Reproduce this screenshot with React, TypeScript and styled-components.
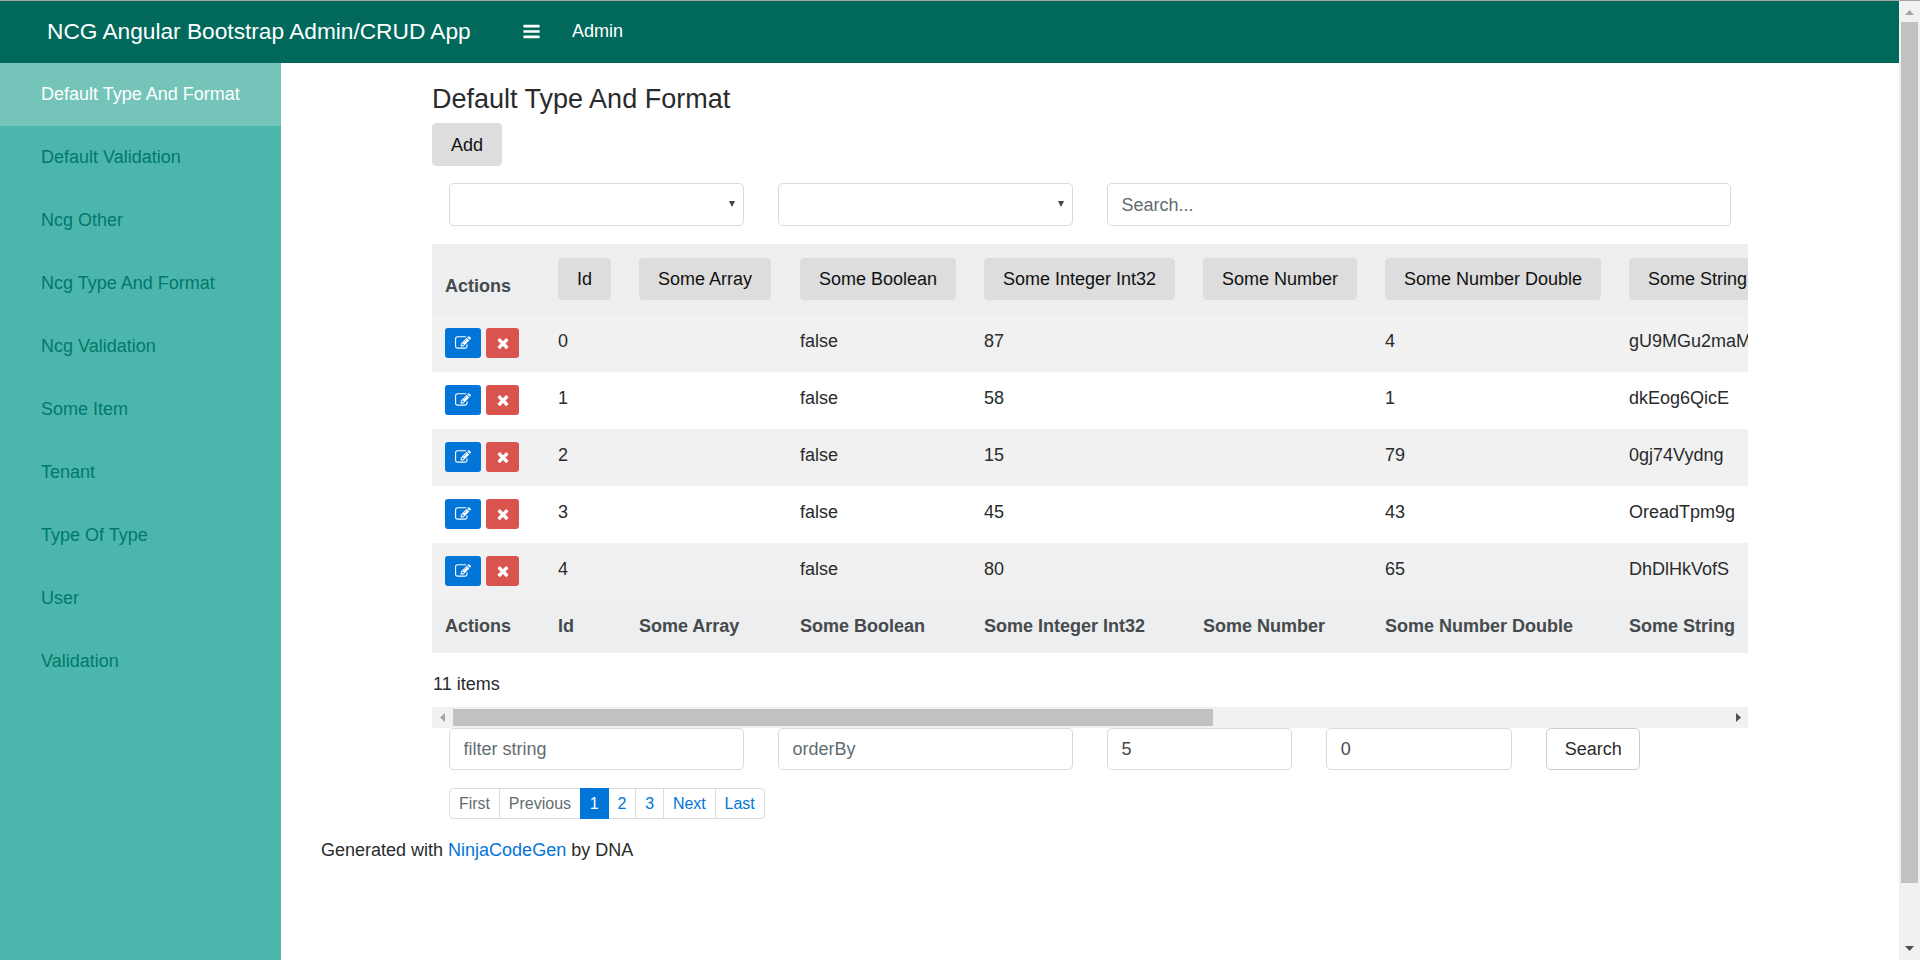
import React from "react";
import styled, { createGlobalStyle } from "styled-components";

const Global = createGlobalStyle`
  html, body { margin: 0; padding: 0; height: 960px; overflow: hidden; background: #fff; }
  body { font-family: "Liberation Sans", Arial, sans-serif; font-size: 18px; line-height: 27px; color: #292b2c; }
  * { box-sizing: border-box; }
`;

const Page = styled.div`
  display: flex;
  flex-direction: column;
  width: 1920px;
  height: 960px;
  overflow: hidden;
  border-top: 1px solid #a6a6a6;
`;
const Shell = styled.div`
  flex: 1;
  display: flex;
  min-height: 0;
`;
const Main = styled.div`
  flex: 1;
  display: flex;
  flex-direction: column;
  min-width: 0;
`;
const Rail = styled.div`
  width: 21px;
  background: #f1f1f1;
  display: flex;
  flex-direction: column;
  align-items: center;
  padding-top: 9px;
`;
const RailThumb = styled.div`
  width: 17px;
  height: 861px;
  margin-top: 7px;
  background: #c1c1c1;
`;
const RailDown = styled.div`
  margin-top: 63px;
  display: flex;
`;
const Header = styled.header`
  height: 62px;
  flex: none;
  background: #00695c;
  display: flex;
  align-items: center;
  color: #fff;
  padding: 0 0 2px 47px;
`;
const Brand = styled.div`
  font-size: 22.7px;
  width: 475px;
  white-space: nowrap;
`;
const MenuToggle = styled.div`
  display: flex;
  width: 50px;
`;
const HeaderLink = styled.div`
  font-size: 18px;
`;
const Body = styled.div`
  flex: 1;
  display: flex;
  min-height: 0;
`;
const Sidebar = styled.nav`
  width: 281px;
  flex: none;
  background: #4db6ac;
`;
const SideItem = styled.div<{ $active?: boolean }>`
  height: 63px;
  padding: 0 0 0 41px;
  display: flex;
  align-items: center;
  color: ${(p) => (p.$active ? "#fff" : "#00796b")};
  background: ${(p) => (p.$active ? "#74c4ba" : "transparent")};
`;
const Content = styled.main`
  flex: 1;
  min-width: 0;
  padding: 22px 40px 0;
`;
const Inner = styled.div`
  margin: 0 111px;
`;
const Title = styled.h3`
  margin: 0 0 10px;
  font-size: 27px;
  font-weight: 400;
  line-height: 28px;
`;
const GrayButton = styled.button`
  display: inline-block;
  height: 42px;
  padding: 0 18px;
  border: 1px solid #ddd;
  border-radius: 4px;
  background: #ddd;
  color: #111;
  font: 400 18px/27px "Liberation Sans", Arial, sans-serif;
  white-space: nowrap;
`;
const AddButton = styled(GrayButton)`
  display: block;
  height: 43px;
  padding-top: 2px;
`;
const GridRow = styled.div<{ $top?: number }>`
  display: grid;
  grid-template-columns: repeat(12, 1fr);
  margin-top: ${(p) => p.$top ?? 0}px;
`;
const Col = styled.div<{ $span: number }>`
  grid-column: span ${(p) => p.$span};
  padding: 0 17px 0 16.5px;
  position: relative;
`;
const fieldCss = `
  display: block;
  width: 100%;
  height: 42px;
  padding: 0 14px;
  border: 1px solid #d9d9d9;
  border-radius: 4.8px;
  background: #fff;
  color: #464a4c;
  font: 400 18px/27px "Liberation Sans", Arial, sans-serif;
  outline: none;
  &::placeholder { color: #636c72; opacity: 1; }
`;
const Input = styled.input`${fieldCss}`;
const Select = styled.select`
  ${fieldCss}
  height: 43px;
  appearance: none;
`;
const SearchInput = styled(Input)`
  height: 43px;
  padding-top: 2px;
`;
const Caret = styled.span`
  position: absolute;
  right: 26px;
  top: 18px;
  width: 0;
  height: 0;
  border-left: 3.5px solid transparent;
  border-right: 3.5px solid transparent;
  border-top: 6px solid #444;
`;
const SearchButton = styled.button`
  height: 42px;
  width: 94px;
  margin-left: 1px;
  border: 1px solid #ccc;
  border-radius: 4.8px;
  background: #fff;
  color: #292b2c;
  font: 400 18px/27px "Liberation Sans", Arial, sans-serif;
  padding: 0;
`;
const TableClip = styled.div`
  margin-top: 18px;
  overflow: hidden;
  height: 409px;
`;
const Table = styled.table`
  border-collapse: collapse;
  table-layout: fixed;
  width: 2204px;
`;
const HeadCell = styled.th`
  height: 71px;
  padding: 14px 0 0 13px;
  background: #eceeef;
  color: #464a4c;
  text-align: left;
  vertical-align: top;
  font-weight: 700;
  white-space: nowrap;
`;
const ActionsLabel = styled.div`
  padding-top: 15px;
`;
const BodyRow = styled.tr<{ $striped: boolean }>`
  background: ${(p) => (p.$striped ? "#f1f1f1" : "#fff")};
`;
const Cell = styled.td`
  height: 57px;
  padding: 13px 0 0 13px;
  vertical-align: top;
  white-space: nowrap;
`;
const ActionCell = styled(Cell)`
  padding-top: 13px;
`;
const Actions = styled.div`
  display: flex;
  gap: 5px;
`;
const IconButton = styled.button<{ $bg: string; $w: number }>`
  width: ${(p) => p.$w}px;
  height: 30px;
  padding: 0;
  border: 0;
  border-radius: 3px;
  background: ${(p) => p.$bg};
  color: #fff;
  display: flex;
  align-items: center;
  justify-content: center;
`;
const FootCell = styled.th`
  height: 53px;
  padding: 0 0 1px 13px;
  background: #eceeef;
  color: #464a4c;
  text-align: left;
  font-weight: 700;
  white-space: nowrap;
`;
const Count = styled.div`
  margin: 18px 0 9px 1px;
  height: 27px;
`;
const HScroll = styled.div`
  height: 21px;
  background: #f1f1f1;
  display: flex;
  align-items: center;
  padding: 0 7px 0 8px;
`;
const HThumb = styled.div`
  width: 760px;
  height: 17px;
  margin-left: 8px;
  background: #c1c1c1;
`;
const HSpacer = styled.div`
  flex: 1;
`;
const Pager = styled.ul`
  display: flex;
  list-style: none;
  margin: 18px 0 0 17px;
  padding: 0;
  font-size: 16px;
`;
const PageItem = styled.li<{ $state?: "off" | "on" }>`
  height: 31px;
  line-height: 29px;
  padding: 0 8.9px;
  margin-left: -1px;
  border: 1px solid ${(p) => (p.$state === "on" ? "#0275d8" : "#ddd")};
  background: ${(p) => (p.$state === "on" ? "#0275d8" : "#fff")};
  color: ${(p) => (p.$state === "on" ? "#fff" : p.$state === "off" ? "#636c72" : "#0275d8")};
  position: relative;
  z-index: ${(p) => (p.$state === "on" ? 1 : 0)};
  &:first-child { margin-left: 0; border-radius: 4px 0 0 4px; }
  &:last-child { border-radius: 0 4px 4px 0; }
`;
const Footer = styled.p`
  margin: 18px 0 0;
`;
const Link = styled.a`
  color: #0275d8;
  text-decoration: none;
`;

const PENCIL =
  "M888 1184l116-116-152-152-116 116v56h96v96h56zm440-720q-16-16-33 1l-350 350q-17 17-1 33t33-1l350-350q17-17 1-33zm80 594v190q0 119-84.5 203.5t-203.5 84.5h-832q-119 0-203.5-84.5t-84.5-203.5v-832q0-119 84.5-203.5t203.5-84.5h832q63 0 117 25 15 7 18 23 3 17-9 29l-49 49q-14 14-32 8-23-6-45-6h-832q-66 0-113 47t-47 113v832q0 66 47 113t113 47h832q66 0 113-47t47-113v-126q0-13 9-22l64-64q15-15 35-7t20 29zm-96-738l288 288-672 672h-288v-288zm444 132l-92 92-288-288 92-92q28-28 68-28t68 28l152 152q28 28 28 68t-28 68z";
const TIMES =
  "M1490 1322q0 40-28 68l-136 136q-28 28-68 28t-68-28l-294-294-294 294q-28 28-68 28t-68-28l-136-136q-28-28-28-68t28-68l294-294-294-294q-28-28-28-68t28-68l136-136q28-28 68-28t68 28l294 294 294-294q28-28 68-28t68 28l136 136q28 28 28 68t-28 68l-294 294 294 294q28 28 28 68z";
const BARS =
  "M1664 1344v128q0 26-19 45t-45 19h-1408q-26 0-45-19t-19-45v-128q0-26 19-45t45-19h1408q26 0 45 19t19 45zm0-512v128q0 26-19 45t-45 19h-1408q-26 0-45-19t-19-45v-128q0-26 19-45t45-19h1408q26 0 45 19t19 45zm0-512v128q0 26-19 45t-45 19h-1408q-26 0-45-19t-19-45v-128q0-26 19-45t45-19h1408q26 0 45 19t19 45z";

const Glyph = ({ d, size }: { d: string; size: number }) => (
  <svg width={size} height={size} viewBox="0 0 1792 1792" fill="currentColor">
    <path d={d} />
  </svg>
);

const Tri = ({ dir, color, w, h }: { dir: "up" | "down" | "left" | "right"; color: string; w: number; h: number }) => {
  const pts = {
    up: `0,${h} ${w},${h} ${w / 2},0`,
    down: `0,0 ${w},0 ${w / 2},${h}`,
    left: `${w},0 ${w},${h} 0,${h / 2}`,
    right: `0,0 0,${h} ${w},${h / 2}`,
  }[dir];
  return (
    <svg width={w} height={h} viewBox={`0 0 ${w} ${h}`} style={{ flex: "none", display: "block" }}>
      <polygon points={pts} fill={color} />
    </svg>
  );
};

const NAV = [
  "Default Type And Format",
  "Default Validation",
  "Ncg Other",
  "Ncg Type And Format",
  "Ncg Validation",
  "Some Item",
  "Tenant",
  "Type Of Type",
  "User",
  "Validation",
];
const COLS = ["Id", "Some Array", "Some Boolean", "Some Integer Int32", "Some Number", "Some Number Double", "Some String"];
const WIDTHS = [113, 81, 161, 184, 219, 182, 244, 1020];
const ROWS = [
  ["0", "87", "4", "gU9MGu2maMz"],
  ["1", "58", "1", "dkEog6QicE"],
  ["2", "15", "79", "0gj74Vydng"],
  ["3", "45", "43", "OreadTpm9g"],
  ["4", "80", "65", "DhDlHkVofS"],
];

export default function App() {
  return (
    <>
      <Global />
      <Page>
        <Shell>
          <Main>
            <Header>
              <Brand>NCG Angular Bootstrap Admin/CRUD App</Brand>
              <MenuToggle>
                <Glyph d={BARS} size={19} />
              </MenuToggle>
              <HeaderLink>Admin</HeaderLink>
            </Header>
            <Body>
              <Sidebar>
                {NAV.map((n, i) => (
                  <SideItem key={n} $active={i === 0}>
                    {n}
                  </SideItem>
                ))}
              </Sidebar>
              <Content>
                <Inner>
                  <Title>Default Type And Format</Title>
                  <AddButton>Add</AddButton>
                  <GridRow $top={17}>
                    <Col $span={3}>
                      <Select />
                      <Caret />
                    </Col>
                    <Col $span={3}>
                      <Select />
                      <Caret />
                    </Col>
                    <Col $span={6}>
                      <SearchInput placeholder="Search..." />
                    </Col>
                  </GridRow>
                  <TableClip>
                    <Table>
                      <colgroup>
                        {WIDTHS.map((w, i) => (
                          <col key={i} width={w} />
                        ))}
                      </colgroup>
                      <thead>
                        <tr>
                          <HeadCell>
                            <ActionsLabel>Actions</ActionsLabel>
                          </HeadCell>
                          {COLS.map((c) => (
                            <HeadCell key={c}>
                              <GrayButton>{c}</GrayButton>
                            </HeadCell>
                          ))}
                          <HeadCell />
                        </tr>
                      </thead>
                      <tbody>
                        {ROWS.map((r, i) => (
                          <BodyRow key={r[0]} $striped={i % 2 === 0}>
                            <ActionCell>
                              <Actions>
                                <IconButton $bg="#0275d8" $w={36}>
                                  <Glyph d={PENCIL} size={16} />
                                </IconButton>
                                <IconButton $bg="#d9534f" $w={33}>
                                  <Glyph d={TIMES} size={16} />
                                </IconButton>
                              </Actions>
                            </ActionCell>
                            <Cell>{r[0]}</Cell>
                            <Cell />
                            <Cell>false</Cell>
                            <Cell>{r[1]}</Cell>
                            <Cell />
                            <Cell>{r[2]}</Cell>
                            <Cell>{r[3]}</Cell>
                            <Cell />
                          </BodyRow>
                        ))}
                      </tbody>
                      <tfoot>
                        <tr>
                          <FootCell>Actions</FootCell>
                          {COLS.map((c) => (
                            <FootCell key={c}>{c}</FootCell>
                          ))}
                          <FootCell />
                        </tr>
                      </tfoot>
                    </Table>
                  </TableClip>
                  <Count>11 items</Count>
                  <HScroll>
                    <Tri dir="left" color="#a3a3a3" w={5} h={9} />
                    <HThumb />
                    <HSpacer />
                    <Tri dir="right" color="#505050" w={5} h={9} />
                  </HScroll>
                  <GridRow>
                    <Col $span={3}>
                      <Input placeholder="filter string" />
                    </Col>
                    <Col $span={3}>
                      <Input placeholder="orderBy" />
                    </Col>
                    <Col $span={2}>
                      <Input defaultValue="5" />
                    </Col>
                    <Col $span={2}>
                      <Input defaultValue="0" />
                    </Col>
                    <Col $span={2}>
                      <SearchButton>Search</SearchButton>
                    </Col>
                  </GridRow>
                  <Pager>
                    <PageItem $state="off">First</PageItem>
                    <PageItem $state="off">Previous</PageItem>
                    <PageItem $state="on">1</PageItem>
                    <PageItem>2</PageItem>
                    <PageItem>3</PageItem>
                    <PageItem>Next</PageItem>
                    <PageItem>Last</PageItem>
                  </Pager>
                </Inner>
                <Footer>
                  Generated with <Link>NinjaCodeGen</Link> by DNA
                </Footer>
              </Content>
            </Body>
          </Main>
          <Rail>
            <Tri dir="up" color="#a3a3a3" w={9} h={5} />
            <RailThumb />
            <RailDown>
              <Tri dir="down" color="#505050" w={9} h={5} />
            </RailDown>
          </Rail>
        </Shell>
      </Page>
    </>
  );
}
